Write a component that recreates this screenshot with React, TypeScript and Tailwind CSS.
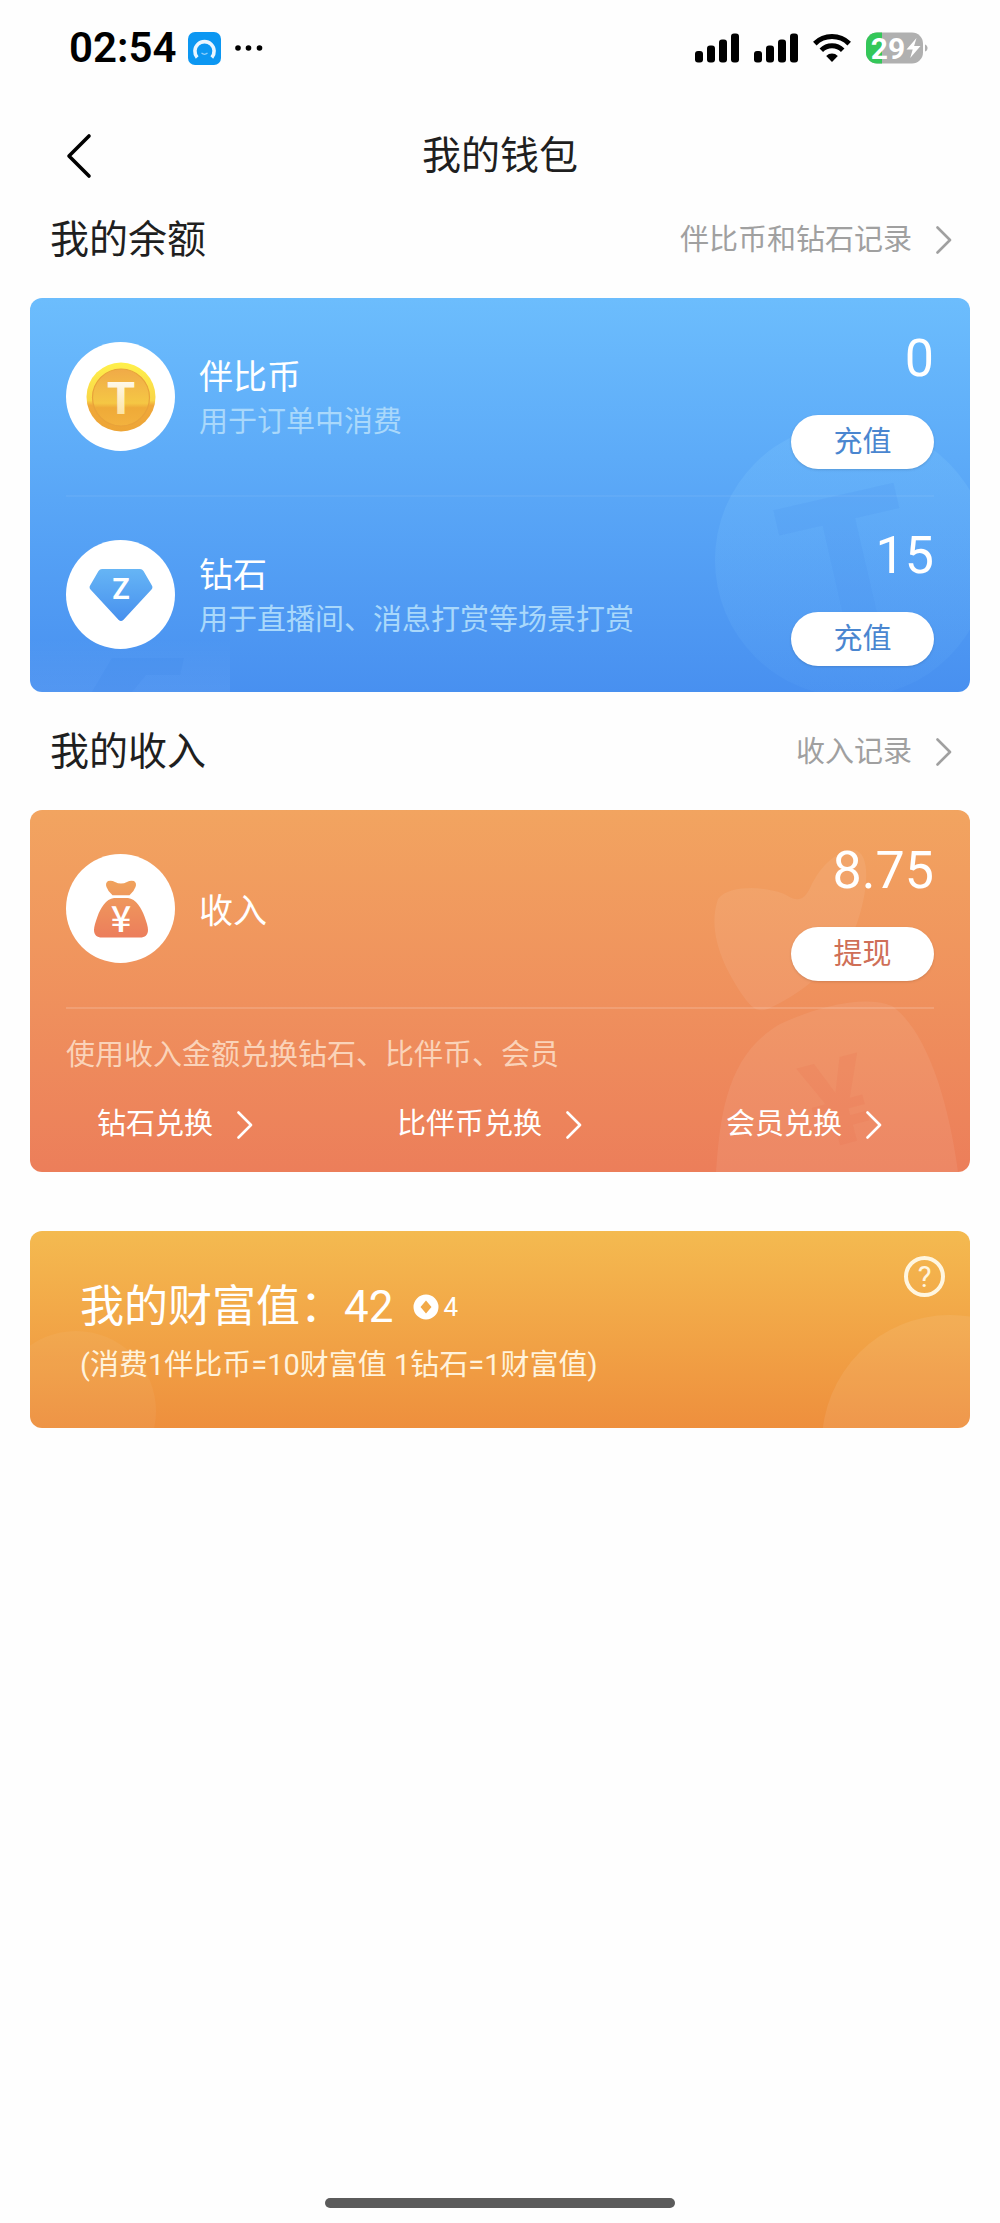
import React from 'react';

interface ChevronProps {
  className?: string;
}

const ChevronRight: React.FC<ChevronProps> = ({ className }) => (
  <svg viewBox="0 0 16 28" className={`h-7 w-4 shrink-0 ${className ?? ''}`} fill="none" stroke="currentColor" strokeWidth="2.6" strokeLinecap="round" strokeLinejoin="round" aria-hidden="true">
    <path d="M1.500 1.500 14 14 1.500 26.500" />
  </svg>
);

const SignalIcon: React.FC = () => (
  <svg viewBox="0 0 44 30" className="h-[30px] w-11" aria-hidden="true">
    <rect x="0" y="18" width="8" height="11.5" rx="3" />
    <rect x="12" y="12.5" width="8" height="17" rx="3" />
    <rect x="24" y="6.5" width="8" height="23" rx="3" />
    <rect x="36" y="0.5" width="8" height="29" rx="3" />
  </svg>
);

const WifiIcon: React.FC = () => (
  <svg viewBox="0 0 38 28" className="h-7 w-[38px]" fill="none" stroke="#000" strokeWidth="5" aria-hidden="true">
    <path d="M1.8 9.6a24.5 24.5 0 0 1 34.4 0" />
    <path d="M8.3 16.2a15.2 15.2 0 0 1 21.4 0" />
    <path d="M19 28l-5.8-6a8.2 8.2 0 0 1 11.6 0z" fill="#000" stroke="none" />
  </svg>
);

const BatteryIcon: React.FC = () => (
  <svg viewBox="0 0 62 32" className="h-8 w-[62px] overflow-visible" role="img" aria-label="29%">
    <defs>
      <clipPath id="battery">
        <rect x="0" y="0.5" width="57" height="31" rx="11" />
      </clipPath>
    </defs>
    <g clipPath="url(#battery)">
      <rect width="57" height="32" fill="#b0b0b0" />
      <rect width="16" height="32" fill="#34c759" />
    </g>
    <path d="M59 12.5c3.4 1 3.4 6 0 7z" fill="#b0b0b0" />
    <text x="22" y="26.500" textAnchor="middle" fontSize="30" fontWeight="700" fill="#fff">29</text>
    <path d="M50.5 6 40.5 17.5h6.2L44.2 26 54.5 14h-6.4z" fill="#fff" />
  </svg>
);

const StatusBar: React.FC = () => (
  <div className="flex h-24 items-center justify-between pr-[72px] pl-[69px]">
    <div className="flex items-center">
      <span className="text-[42px] leading-[60px] font-semibold text-black">02:54</span>
      <svg viewBox="0 0 33 33" className="ml-3 size-[33px]" aria-hidden="true">
        <rect width="33" height="33" rx="7" fill="#0c97f2" />
        <path d="M9.200 25.500a9.600 9.600 0 1 1 14.600 0" fill="none" stroke="#eaf6ff" strokeWidth="3.6" />
        <path d="M13.500 21q3 2.600 6 0" fill="none" stroke="#8fd0fb" strokeWidth="1.2" />
      </svg>
      <svg viewBox="0 0 28 6" className="ml-[14px] h-[6px] w-7" aria-hidden="true">
        <circle cx="3" cy="3" r="2.8" />
        <circle cx="13.5" cy="3" r="2.8" />
        <circle cx="24.5" cy="3" r="2.8" />
      </svg>
    </div>
    <div className="flex items-center gap-[15px]">
      <SignalIcon />
      <SignalIcon />
      <WifiIcon />
      <BatteryIcon />
    </div>
  </div>
);

const CoinIcon: React.FC = () => (
  <svg viewBox="0 0 70 70" className="size-[70px]" aria-hidden="true">
    <defs>
      <linearGradient id="coinRim" x1="0" y1="0" x2="0" y2="1">
        <stop offset="0" stopColor="#fff04a" />
        <stop offset="0.55" stopColor="#f9d648" />
        <stop offset="0.62" stopColor="#f0a83a" />
        <stop offset="1" stopColor="#eda536" />
      </linearGradient>
      <linearGradient id="coinFace" x1="0" y1="0" x2="0" y2="1">
        <stop offset="0" stopColor="#f0aa48" />
        <stop offset="0.6" stopColor="#f5c744" />
        <stop offset="0.68" stopColor="#efaa38" />
        <stop offset="1" stopColor="#f3b23e" />
      </linearGradient>
      <linearGradient id="coinLetter" x1="0" y1="0" x2="0" y2="1">
        <stop offset="0" stopColor="#fff" />
        <stop offset="1" stopColor="#fbdc8c" />
      </linearGradient>
    </defs>
    <circle cx="35" cy="35" r="34.5" fill="url(#coinRim)" />
    <circle cx="35" cy="35.5" r="28.5" fill="url(#coinFace)" stroke="#e8a23a" strokeWidth="1.2" />
    <text x="35" y="52" textAnchor="middle" fontSize="45" fontWeight="800" fill="url(#coinLetter)">T</text>
  </svg>
);

const DiamondIcon: React.FC = () => (
  <svg viewBox="0 0 64 54" className="h-[54px] w-16" aria-hidden="true">
    <defs>
      <linearGradient id="gem" x1="0" y1="0" x2="0" y2="1">
        <stop offset="0" stopColor="#66b5f5" />
        <stop offset="1" stopColor="#4790ee" />
      </linearGradient>
    </defs>
    <path d="M13 1h38q2.2 0 3.5 2l8.4 14.5q1.2 2-.4 4L34.3 52q-2.300 2-4.600 0L1.500 21.500q-1.600-2-.4-4L9.500 3Q10.800 1 13 1z" fill="url(#gem)" />
    <text x="32" y="31" textAnchor="middle" fontSize="29" fontWeight="600" fill="#fff">Z</text>
  </svg>
);

const MoneyBagIcon: React.FC = () => (
  <svg viewBox="0 0 56 58" className="h-[58px] w-14 overflow-visible" aria-hidden="true">
    <defs>
      <linearGradient id="bag" gradientUnits="userSpaceOnUse" x1="0" y1="0" x2="0" y2="58">
        <stop offset="0" stopColor="#f0a35c" />
        <stop offset="1" stopColor="#ec7d5c" />
      </linearGradient>
    </defs>
    <path d="M15 1q4-.8 7 1 6 3 12 0 3-1.800 7-1 3 2 1.500 6-1.500 4.500-6 8.300h-17q-4.500-3.800-6-8.300Q12 3 15 1z" fill="url(#bag)" />
    <path d="M21 18h14c8 1 13.500 10 16.500 18.500 2 5.500 3.500 10 3.500 13.500 0 5-3 7.500-8 7.500H9c-5 0-8-2.500-8-7.500 0-3.500 1.500-8 3.500-13.500C7.500 28 13 19 21 18z" fill="url(#bag)" />
    <text x="28" y="52" textAnchor="middle" fontSize="36" fontWeight="500" fill="#fff" className="font-['Noto_Sans_CJK_SC',sans-serif]">¥</text>
  </svg>
);

const BalanceBackdrop: React.FC = () => (
  <svg viewBox="0 0 940 394" preserveAspectRatio="xMaxYMax slice" className="absolute inset-0 size-full" aria-hidden="true">
    <defs>
      <linearGradient id="coinGhost" x1="0" y1="0" x2="0" y2="1">
        <stop offset="0" stopColor="#7cc4fd" stopOpacity="0.3" />
        <stop offset="1" stopColor="#7cc4fd" stopOpacity="0.06" />
      </linearGradient>
      <linearGradient id="gemGhost" x1="0" y1="0" x2="0" y2="1">
        <stop offset="0" stopColor="#fff" stopOpacity="0" />
        <stop offset="1" stopColor="#fff" stopOpacity="0.06" />
      </linearGradient>
    </defs>
    <circle cx="822" cy="262" r="137" fill="url(#coinGhost)" />
    <text x="820" y="346" textAnchor="middle" fontSize="210" fontWeight="800" fill="#4a92f0" fillOpacity="0.18" transform="rotate(-13 820 270)">T</text>
    <path d="M0 340h200v54H0z" fill="url(#gemGhost)" />
    <path d="M82 360h72l-4 17h-34l-14 17H62z" fill="#3f86ea" fillOpacity="0.18" />
  </svg>
);

const IncomeBackdrop: React.FC = () => (
  <svg viewBox="0 0 940 362" preserveAspectRatio="xMaxYMax slice" className="absolute inset-0 size-full" aria-hidden="true">
    <g fill="#fff" fillOpacity="0.07">
      <path d="M688 89c12-16 56-12 70-3 10 6 16 4 22-8 12-26 30-38 44-38 18 2 14 44 2 76-14 36-56 68-82 80-14 8-20 4-28-6-20-28-40-66-28-101z" />
      <path d="M686 362c4-60 12-118 64-148 34-16 84-30 112-18 34 24 56 92 66 166z" />
    </g>
    <text x="810" y="334" textAnchor="middle" fontSize="120" fontWeight="700" fill="#e9744f" fillOpacity="0.2" transform="rotate(-15 810 300)">¥</text>
  </svg>
);

const WealthBackdrop: React.FC = () => (
  <svg viewBox="0 0 940 197" preserveAspectRatio="xMaxYMax slice" className="absolute inset-0 size-full" fill="#fff" aria-hidden="true">
    <circle cx="46" cy="180" r="80" fillOpacity="0.05" />
    <circle cx="920" cy="212" r="128" fillOpacity="0.08" />
  </svg>
);

interface SectionHeadingProps {
  title: string;
  link: string;
}

const SectionHeading: React.FC<SectionHeadingProps> = ({ title, link }) => (
  <div className="mb-[34px] flex h-[50px] items-center justify-between pt-[2px] pr-[18px] pl-5">
    <h2 className="text-[39px] leading-[50px] text-[#1f1f1f]">{title}</h2>
    <a href="#" className="flex items-center gap-6 text-[29px] leading-[45px] text-[#a0a0a0]">
      {link}
      <ChevronRight />
    </a>
  </div>
);

interface WalletRowProps {
  icon: React.ReactNode;
  name: string;
  hint?: string;
  amount: string;
  action: string;
  actionColor: string;
  divided?: boolean;
}

const WalletRow: React.FC<WalletRowProps> = ({ icon, name, hint, amount, action, actionColor, divided }) => (
  <div className={`relative mx-9 flex h-[197px] items-center gap-6 ${divided ? 'border-t-2 border-white/5' : ''}`}>
    <div className="flex size-[109px] shrink-0 items-center justify-center rounded-full bg-white">{icon}</div>
    <div className="flex-1 pt-[6px]">
      <h3 className="text-[34px] leading-[45px]">{name}</h3>
      {hint && <p className="text-[29px] leading-[45px] text-[#a9d8fb]">{hint}</p>}
    </div>
    <div className="flex flex-col items-end gap-7 self-end pb-[26px]">
      <span className="text-[52px] leading-[56px] font-[450]">{amount}</span>
      <button type="button" className={`h-[54px] w-[143px] rounded-full bg-white text-[29px] leading-[45px] shadow-sm ${actionColor}`}>
        {action}
      </button>
    </div>
  </div>
);

const exchanges = ['钻石兑换', '比伴币兑换', '会员兑换'];

const App: React.FC = () => {
  return (
    <div className="flex min-h-screen flex-col bg-[#fefefe] font-['Roboto','Noto_Sans_CJK_SC',sans-serif]">
      <StatusBar />

      <header className="grid h-[118px] grid-cols-[1fr_auto_1fr] items-center px-[65px] pt-[2px]">
        <button type="button" aria-label="返回" className="w-7">
          <svg viewBox="0 0 28 46" className="h-[46px] w-7" fill="none" stroke="#000" strokeWidth="3.6" strokeLinecap="round" strokeLinejoin="round" aria-hidden="true">
            <path d="M24 3 4 23l20 20" />
          </svg>
        </button>
        <h1 className="text-[39px] leading-[50px] text-[#1f1f1f]">我的钱包</h1>
      </header>

      <main className="flex flex-col gap-[34px] px-[30px]">
        <section>
          <SectionHeading title="我的余额" link="伴比币和钻石记录" />
          <div className="relative overflow-hidden rounded-xl bg-linear-to-b from-[#6cbdfd] to-[#4890f0] text-white">
            <BalanceBackdrop />
            <WalletRow icon={<CoinIcon />} name="伴比币" hint="用于订单中消费" amount="0" action="充值" actionColor="text-[#4a86d0]" />
            <WalletRow icon={<DiamondIcon />} name="钻石" hint="用于直播间、消息打赏等场景打赏" amount="15" action="充值" actionColor="text-[#4a86d0]" divided />
          </div>
        </section>

        <section>
          <SectionHeading title="我的收入" link="收入记录" />
          <div className="relative overflow-hidden rounded-xl bg-linear-to-b from-[#f2a460] to-[#ec7e5a] text-white">
            <IncomeBackdrop />
            <WalletRow icon={<MoneyBagIcon />} name="收入" amount="8.75" action="提现" actionColor="text-[#cf6f57]" />
            <p className="relative mx-9 border-t-2 border-white/15 pt-6 text-[29px] leading-[45px] text-[#fad3b9]">
              使用收入金额兑换钻石、比伴币、会员
            </p>
            <div className="relative flex justify-between pt-6 pr-[88px] pb-[25px] pl-[67px]">
              {exchanges.map(label => (
                <a key={label} href="#" className="flex items-center gap-6 text-[29px] leading-[45px]">
                  {label}
                  <ChevronRight />
                </a>
              ))}
            </div>
          </div>
        </section>

        <section className="relative mt-[25px] flex items-start justify-between overflow-hidden rounded-xl bg-linear-to-b from-[#f4ba50] to-[#ee8f3d] pr-[25px] pl-[50px] text-white">
          <WealthBackdrop />
          <div className="relative pt-[46px] pb-10">
            <h2 className="flex items-center text-[44px] leading-[60px]">
              我的财富值：<span className="font-[450]">42</span>
              <span className="ml-5 flex items-center gap-1 text-[26px] leading-[30px]">
                <svg viewBox="0 0 26 26" className="size-[26px]" aria-hidden="true">
                  <path fillRule="evenodd" d="M13 .5a12.500 12.500 0 1 1 0 25 12.500 12.500 0 0 1 0-25zM13 6.500 7.500 13l5.500 6.500 5.500-6.500z" fill="#fff" />
                </svg>
                4
              </span>
            </h2>
            <p className="mt-[6px] text-[29px] leading-[45px] text-[#fff3dc]">(消费1伴比币=10财富值 1钻石=1财富值)</p>
          </div>
          <button type="button" aria-label="财富值说明" className="relative mt-[25px] flex size-[41px] items-center justify-center rounded-full border-4 border-[#fff6e0] text-[29px] leading-[34px] text-[#fff6e0]">
            ?
          </button>
        </section>
      </main>

      <div className="mt-auto flex justify-center pb-[15px]">
        <div className="h-[10px] w-[35%] rounded-full bg-[#5b5b5b]" />
      </div>
    </div>
  );
};

export default App;
